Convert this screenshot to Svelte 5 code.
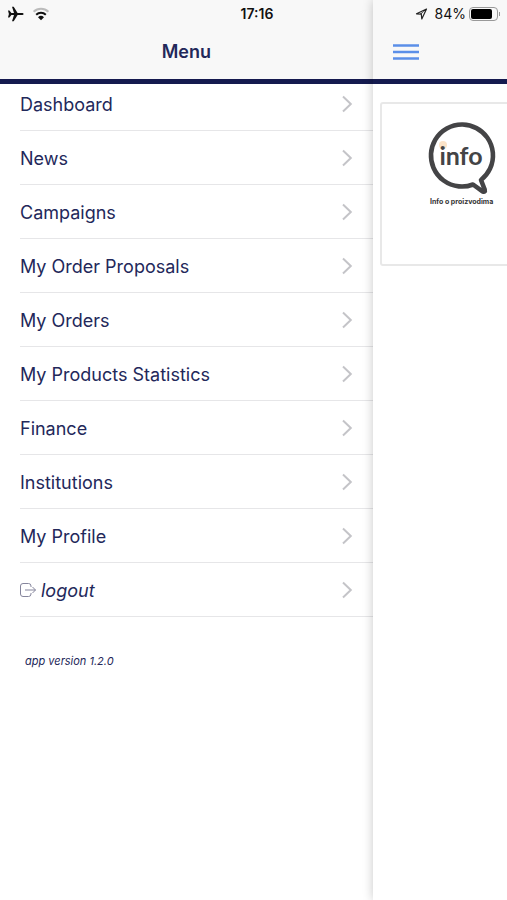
<script>
  const items = [
    'Dashboard',
    'News',
    'Campaigns',
    'My Order Proposals',
    'My Orders',
    'My Products Statistics',
    'Finance',
    'Institutions',
    'My Profile'
  ];

  let battery = 84;
</script>

<div class="app">
  <div class="status">
    <div class="status-left">
      <svg width="18" height="16" viewBox="0 0 18 16" aria-hidden="true">
        <path d="M1 4.5h1.4L4.4 7H7L5 .8h1.7L10.6 7h4.2c1 0 1.9.5 1.9 1s-.9 1-1.9 1h-4.2l-3.9 6.2H5L7 9H4.4l-2 2.5H1L1.9 8z" fill="#111" />
      </svg>
      <svg width="18" height="14" viewBox="0 0 18 14" fill="none" aria-hidden="true">
        <path d="M1.6 4.8a10.8 10.8 0 0 1 14.8 0" stroke="#bbb" stroke-width="2" />
        <path d="M4.2 7.7a7 7 0 0 1 9.6 0" stroke="#111" stroke-width="2" />
        <path d="M9 13.2l-3-3a4.3 4.3 0 0 1 6 0z" fill="#111" />
      </svg>
    </div>
    <span class="time">17:16</span>
    <div class="status-right">
      <svg width="13" height="12" viewBox="0 0 13 12" aria-hidden="true">
        <path d="M11.5 1L1.5 5.8l4.8.3.5 4.9z" fill="none" stroke="#222" stroke-width="1.2" stroke-linejoin="round" />
        <path d="M11.5 1L6.3 6.1l-1.6-.1z" fill="#222" />
      </svg>
      <span>{battery}%</span>
      <span class="battery"><span class="level" style="width: {battery}%"></span></span>
    </div>
  </div>

  <div class="menu">
    <header class="toolbar">
      <h1>Menu</h1>
    </header>
    <nav>
      {#each items as item}
        <button class="item">
          <span>{item}</span>
          <svg class="chevron" width="12" height="18" viewBox="0 0 12 18" aria-hidden="true">
            <path d="M2 1.5L9.8 9 2 16.5" />
          </svg>
        </button>
      {/each}
      <button class="item">
        <svg class="exit" width="17" height="16" viewBox="0 0 17 16" aria-hidden="true">
          <path d="M11 5V4a2.5 2.5 0 0 0-2.5-2.5H3A2.5 2.5 0 0 0 .5 4v8A2.5 2.5 0 0 0 3 14.5h5.5A2.5 2.5 0 0 0 11 12v-1M5 8h10.5M12.5 5l3 3-3 3" />
        </svg>
        <em>logout</em>
        <svg class="chevron" width="12" height="18" viewBox="0 0 12 18" aria-hidden="true">
          <path d="M2 1.5L9.8 9 2 16.5" />
        </svg>
      </button>
    </nav>
    <p class="version">app version 1.2.0</p>
  </div>

  <div class="page">
    <header class="toolbar">
      <button class="toggle" aria-label="Toggle menu">
        <svg width="26" height="18" viewBox="0 0 26 18" aria-hidden="true">
          <path d="M0 2.5h26M0 9h26M0 15.5h26" stroke="#5b8fe8" stroke-width="2.3" />
        </svg>
      </button>
    </header>
    <a class="card" href="#info">
      <svg width="68" height="74" viewBox="1 -1 68 74" role="img" aria-label="info">
        <path
          d="M46 61.5A31 31 0 1 1 54 57L57.7 66.5Q58.5 69.5 55.5 68.3z"
          fill="none"
          stroke="#444446"
          stroke-width="4.6"
          stroke-linejoin="round"
        />
        <circle cx="16" cy="22" r="4" fill="#fbe3c8" />
        <text x="34" y="42" text-anchor="middle">info</text>
      </svg>
      <span>Info o proizvodima</span>
    </a>
  </div>
</div>

<style>
  :global(body) {
    margin: 0;
    background: #fff;
  }

  .app {
    position: relative;
    display: flex;
    min-height: 100vh;
    overflow: hidden;
    font-family: Inter, "Liberation Sans", sans-serif;
    color: #23285a;
  }

  button {
    border: 0;
    background: none;
    font: inherit;
    color: inherit;
    cursor: pointer;
  }

  /* Status bar lies over both toolbars */
  .status {
    position: absolute;
    z-index: 3;
    top: 0;
    left: 0;
    right: 0;
    display: grid;
    grid-template-columns: 52fr auto 50fr;
    align-items: center;
    box-sizing: border-box;
    height: 27px;
    padding: 0 9px 0 7px;
    font-size: 14px;
    color: #111;
  }

  .status-left,
  .status-right {
    display: flex;
    align-items: center;
    gap: 7px;
  }

  .status-right {
    justify-content: flex-end;
  }

  .time {
    font-weight: 600;
  }

  .battery {
    position: relative;
    box-sizing: border-box;
    width: 29px;
    height: 14px;
    margin-left: -4px;
    padding: 1px;
    border: 1px solid #999;
    border-radius: 4px;
  }

  .battery::after {
    content: "";
    position: absolute;
    right: -3px;
    top: 4px;
    width: 1px;
    height: 4px;
    background: #999;
  }

  .level {
    display: block;
    height: 100%;
    border-radius: 2px;
    background: #000;
  }

  .menu {
    width: 73.5%;
    flex-shrink: 0;
  }

  .page {
    position: relative;
    z-index: 2;
    flex: 1;
    min-width: 0;
    background: #fff;
    box-shadow: 0 0 10px rgba(0, 0, 0, 0.22);
  }

  .toolbar {
    position: relative;
    z-index: 1;
    display: flex;
    align-items: center;
    box-sizing: border-box;
    height: 84px;
    padding-top: 25px;
    border-bottom: 5px solid #151a4f;
    background: #f8f8f8;
  }

  h1 {
    flex: 1;
    margin: 0;
    font-size: 18px;
    font-weight: 600;
    line-height: 24px;
    text-align: center;
  }

  .toggle {
    display: flex;
    margin-left: 20px;
    padding: 0;
  }

  /* The list is scrolled slightly under the toolbar */
  nav {
    margin-top: -7px;
    padding-left: 20px;
  }

  .item {
    display: flex;
    align-items: center;
    box-sizing: border-box;
    width: 100%;
    height: 54px;
    padding: 1px 20px 0 0;
    border-bottom: 1px solid #e6e6e8;
    font-size: 18px;
    text-align: left;
  }

  .chevron {
    margin-left: auto;
    fill: none;
    stroke: #c4c4c8;
    stroke-width: 2;
  }

  .exit {
    margin-right: 4px;
    fill: none;
    stroke: #85859c;
    stroke-width: 1;
  }

  .version {
    margin: 36px 25px;
    font-size: 11px;
    font-style: italic;
    line-height: 16px;
  }

  .card {
    display: flex;
    flex-direction: column;
    align-items: center;
    box-sizing: border-box;
    width: 164px;
    height: 164px;
    margin: 18px 0 0 7px;
    padding-top: 18px;
    border: 2px solid #e8e8e8;
    border-radius: 3px;
    color: #333;
    font-size: 7px;
    font-weight: 700;
    line-height: 12px;
    text-decoration: none;
  }

  .card text {
    font-family: Lato, sans-serif;
    font-size: 25px;
    font-weight: 700;
    fill: #444446;
  }
</style>
